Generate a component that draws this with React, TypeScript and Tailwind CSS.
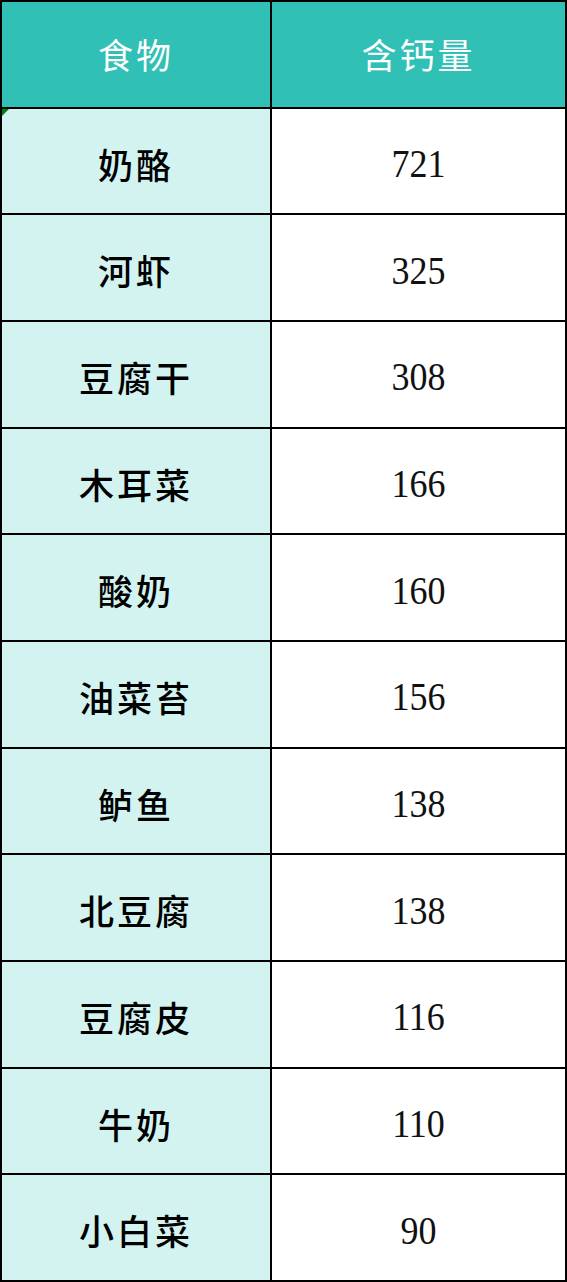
const rows: [string, string][] = [
  ["奶酪", "721"],
  ["河虾", "325"],
  ["豆腐干", "308"],
  ["木耳菜", "166"],
  ["酸奶", "160"],
  ["油菜苔", "156"],
  ["鲈鱼", "138"],
  ["北豆腐", "138"],
  ["豆腐皮", "116"],
  ["牛奶", "110"],
  ["小白菜", "90"],
];

export default function App() {
  return (
    <div className="w-[567px] h-[1282px] bg-black p-[2px] grid grid-cols-[268px_293px] grid-rows-12 gap-[2px] font-['Noto_Sans_CJK_SC',sans-serif]">
      <div className="bg-[#30c0b5] flex items-center justify-center text-white text-[35px] tracking-[3px]">
        食物
      </div>
      <div className="bg-[#30c0b5] flex items-center justify-center text-white text-[35px] tracking-[3px]">
        含钙量
      </div>
      {rows.map(([food, ca], i) => (
        <div key={food + i} className="contents">
          <div className="relative bg-[#d3f3f1] flex items-center justify-center pt-[6px] text-black text-[35px] font-medium tracking-[3px]">
            {i === 0 && (
              <div className="absolute left-0 top-0 w-0 h-0 border-t-[7px] border-t-[#0a7a0a] border-r-[7px] border-r-transparent" />
            )}
            {food}
          </div>
          <div className="bg-white flex items-center justify-center pt-[6px] text-[#111] text-[36px] font-['Liberation_Serif',serif]">
            <span className="inline-block scale-y-110">{ca}</span>
          </div>
        </div>
      ))}
    </div>
  );
}
